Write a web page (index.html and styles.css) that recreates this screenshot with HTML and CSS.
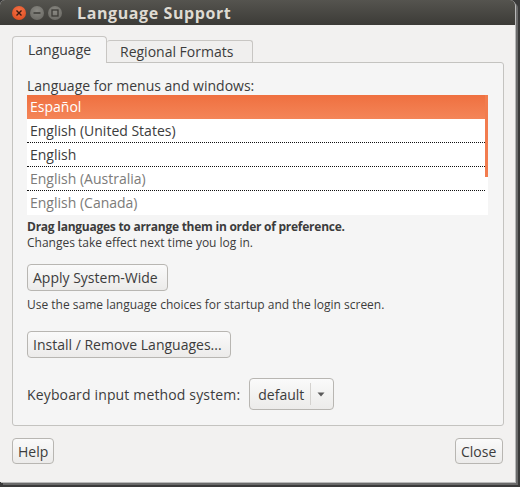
FILE: index.html
```html
<!DOCTYPE html>
<html>
<head>
<meta charset="utf-8">
<link rel="stylesheet" href="styles.css">
</head>
<body>
<div class="window">
  <div class="titlebar">
    <div class="wbtns">
      <span class="wbtn close"><svg width="14" height="14" viewBox="0 0 14 14"><path d="M4.5 4.5L9.5 9.5M9.5 4.5L4.5 9.5" stroke="#3a1a10" stroke-width="1.4"/></svg></span>
      <span class="wbtn"><svg width="14" height="14" viewBox="0 0 14 14"><path d="M3.5 7H10.5" stroke="#3c3b37" stroke-width="1.4"/></svg></span>
      <span class="wbtn"><svg width="14" height="14" viewBox="0 0 14 14"><rect x="4" y="4" width="6" height="6" fill="none" stroke="#3c3b37" stroke-width="1.3"/></svg></span>
    </div>
    <div class="title">Language Support</div>
  </div>
  <div class="body">
    <div class="tabs">
      <div class="tab active">Language</div>
      <div class="tab">Regional Formats</div>
    </div>
    <div class="panel">
      <div class="label">Language for menus and windows:</div>
      <div class="list">
        <div class="row sel">Español</div>
        <div class="row">English (United States)</div>
        <div class="row">English</div>
        <div class="row dim">English (Australia)</div>
        <div class="row dim last">English (Canada)</div>
        <div class="scroll"></div>
      </div>
      <div class="hint bold">Drag languages to arrange them in order of preference.</div>
      <div class="hint">Changes take effect next time you log in.</div>
      <div class="btn b1">Apply System-Wide</div>
      <div class="hint h2">Use the same language choices for startup and the login screen.</div>
      <div class="btn b2">Install / Remove Languages...</div>
      <div class="kbd">
        <span>Keyboard input method system:</span>
        <div class="combo"><span class="cval">default</span><span class="csep"></span><svg class="carrow" width="8" height="6" viewBox="0 0 8 6"><path d="M0.5 1.5H7.5L4 5.5Z" fill="#5a5a5a"/></svg></div>
      </div>
    </div>
    <div class="footer">
      <div class="btn fb help">Help</div>
      <div class="btn fb closeb">Close</div>
    </div>
  </div>
</div>
</body>
</html>
```
FILE: styles.css
```css
html, body {
  margin: 0;
  padding: 0;
  background: #3a3a3a;
  width: 520px;
  height: 487px;
  overflow: hidden;
}
.window {
  width: 515px;
  height: 482px;
  background: #f2f1f0;
  border-radius: 5px 5px 0 0;
  box-shadow: 1px 1px 0 #b8b8b8, 3px 3px 0 #6a6a6a;
  font-family: "Open Sans", "Noto Sans", sans-serif;
  color: #3c3c3c;
  overflow: hidden;
}
.titlebar {
  height: 25px;
  background: linear-gradient(#55544f, #3c3b37);
  display: flex;
  align-items: center;
  padding-left: 12px;
}
.wbtns {
  display: flex;
  gap: 4px;
}
.wbtn {
  width: 14px;
  height: 14px;
  border-radius: 50%;
  background: radial-gradient(circle at 50% 35%, #8a8983, #64635e);
  display: flex;
}
.wbtn.close {
  background: radial-gradient(circle at 50% 35%, #f5744a, #d84517);
}
.title {
  margin-left: 15px;
  color: #dfdbd2;
  font-weight: bold;
  font-size: 16px;
  letter-spacing: 0.6px;
}
.body {
  padding: 11px 11px 0 12px;
}
.tabs {
  display: flex;
  align-items: flex-end;
  height: 26px;
}
.tab {
  font-size: 14px;
  height: 22px;
  line-height: 21px;
  padding: 0 13px;
  border: 1px solid #c8c6c3;
  border-bottom: none;
  border-left: none;
  border-radius: 3px 3px 0 0;
  background: #f0efee;
  box-sizing: border-box;
}
.tab.active {
  height: 27px;
  line-height: 26px;
  width: 95px;
  padding: 0 0 0 15px;
  background: #f5f5f5;
  border-left: 1px solid #c8c6c3;
  position: relative;
  top: 1px;
  border-radius: 4px 4px 0 0;
}
.tab:not(.active) {
  width: 146px;
  padding-left: 13px;
}
.panel {
  background: #f5f5f5;
  border: 1px solid #c4c3c0;
  border-radius: 0 3px 3px 3px;
  height: 364px;
  box-sizing: border-box;
  padding: 14px 15px 0 14px;
}
.label {
  font-size: 14px;
  line-height: 18px;
}
.list {
  width: 461px;
  background: #fff;
  position: relative;
}
.row {
  height: 24px;
  line-height: 23px;
  font-size: 14px;
  padding-left: 3px;
  box-sizing: border-box;
  border-bottom: 1px dotted #111;
  margin-right: 3px;
  color: #3c3c3c;
}
.row.last {
  border-bottom: none;
  margin-right: 0;
}
.row.sel {
  background: linear-gradient(#ef7040, #f48558);
  color: #fff;
  border-bottom: none;
}
.row.dim {
  color: #7c7b79;
}
.scroll {
  position: absolute;
  right: 0;
  top: 0;
  width: 3px;
  height: 82px;
  background: #f27c4e;
}
.hint {
  font-size: 12px;
  line-height: 16px;
}
.hint.bold {
  font-weight: bold;
  margin-top: 4px;
  letter-spacing: -0.25px;
}
.btn {
  display: inline-block;
  font-size: 14px;
  height: 27px;
  line-height: 25px;
  box-sizing: border-box;
  padding: 0 5px;
  border: 1px solid #b8b6b2;
  border-radius: 4px;
  background: linear-gradient(#fafafa, #ecebea);
}
.b1 { margin-top: 13px; width: 141px; }
.h2 { margin-top: 6px; }
.b2 { margin-top: 18px; width: 204px; }
.kbd {
  display: flex;
  align-items: center;
  margin-top: 20px;
  font-size: 14px;
  letter-spacing: 0.15px;
}
.combo {
  margin-left: 9px;
  height: 32px;
  width: 85px;
  box-sizing: border-box;
  border: 1px solid #b8b6b2;
  border-radius: 4px;
  background: linear-gradient(#fafafa, #ecebea);
  display: flex;
  align-items: center;
  padding-left: 8px;
  letter-spacing: 0;
}
.csep {
  width: 1px;
  height: 22px;
  background: #d4d2cf;
  margin-left: 6px;
}
.carrow {
  margin-left: 6px;
}
.footer {
  display: flex;
  justify-content: space-between;
  margin-top: 12px;
  padding-right: 1px;
}
.fb {
  height: 26px;
}
.help { width: 42px; padding: 0 0 0 5px; }
.closeb { width: 48px; padding: 0 0 0 5px; }
```
